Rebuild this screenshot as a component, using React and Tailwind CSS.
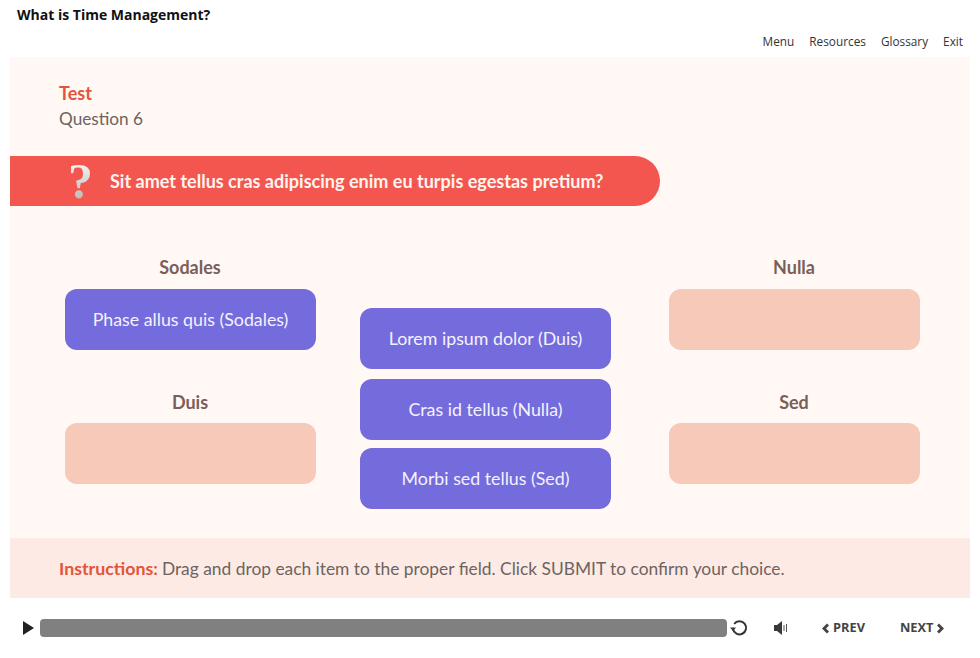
const Tile = ({ children, className = '' }) => (
  <div className={`h-[61px] w-[251px] rounded-xl bg-[#746bdc] flex items-center justify-center text-[17.8px] text-[#f4f2ff] ${className}`}>
    {children}
  </div>
);

const Drop = ({ className = '' }) => (
  <div className={`h-[61px] w-[251px] rounded-xl bg-[#f6c9b8] ${className}`}></div>
);

const Label = ({ children }) => (
  <p className="h-[24px] leading-[23px] w-[250px] text-center text-[18px] font-bold text-[#7a5f58]">{children}</p>
);

const NavLinks = ['Menu', 'Resources', 'Glossary', 'Exit'];

export default function App() {
  return (
    <div className="w-[980px] h-[658px] bg-white overflow-hidden font-['Lato',sans-serif]">
      {/* Cabecera */}
      <div className="h-[57px] flex flex-col font-['Open_Sans',sans-serif]">
        <h1 className="pl-[17px] pt-[5px] h-[34px] leading-[20px] text-[14px] font-bold text-[#111]">What is Time Management?</h1>
        <div className="flex justify-end gap-[15px] pr-[17px] text-[11.8px] leading-[16px] text-[#333] mt-[-1px]">
          {NavLinks.map((item) => (
            <span key={item}>{item}</span>
          ))}
        </div>
      </div>

      {/* Panel de la pregunta */}
      <div className="mx-[10px] h-[481px] bg-[#fff8f5] pt-[24px]">
        <div className="pl-[49px]">
          <p className="h-[25px] leading-[25px] text-[18px] font-bold text-[#e2553a]">Test</p>
          <p className="h-[25px] leading-[25px] text-[17.2px] text-[#6d6361]">Question 6</p>
        </div>

        <div className="mt-[25px] w-[650px] h-[50px] bg-[#f3564e] rounded-r-[25px] flex items-center">
          <span className="w-[100px] pl-[58px] text-[50px] leading-none font-bold font-['Liberation_Serif',serif] bg-gradient-to-b from-white to-[#b5b0ae] bg-clip-text text-transparent">?</span>
          <p className="pt-[2px] text-[18.05px] font-bold text-[#fff3ee]">Sit amet tellus cras adipiscing enim eu turpis egestas pretium?</p>
        </div>

        <div className="mt-[50px] pl-[55px] flex">
          <div className="w-[295px]">
            <Label>Sodales</Label>
            <Tile className="mt-[9px]">Phase allus quis (Sodales)</Tile>
            <div className="mt-[41px]"><Label>Duis</Label></div>
            <Drop className="mt-[8px]" />
          </div>
          <div className="w-[309px] pt-[52px]">
            <Tile>Lorem ipsum dolor (Duis)</Tile>
            <Tile className="mt-[10px]">Cras id tellus (Nulla)</Tile>
            <Tile className="mt-[8px]">Morbi sed tellus (Sed)</Tile>
          </div>
          <div>
            <Label>Nulla</Label>
            <Drop className="mt-[9px]" />
            <div className="mt-[41px]"><Label>Sed</Label></div>
            <Drop className="mt-[8px]" />
          </div>
        </div>
      </div>

      {/* Instrucciones */}
      <div className="mx-[10px] h-[60px] bg-[#fdeae4] pl-[49px] pt-[2px] flex items-baseline leading-[56px] text-[17.36px] text-[#6d6361]">
        <span className="text-[17.8px] font-bold text-[#e2553a] mr-[4px]">Instructions:</span>
        Drag and drop each item to the proper field. Click SUBMIT to confirm your choice.
      </div>

      {/* Controles del reproductor */}
      <div className="h-[60px] flex items-center pl-[23px] font-['Open_Sans',sans-serif]">
        <svg width="11" height="14" viewBox="0 0 11 14">
          <path d="M0 0l11 7-11 7z" fill="#222" />
        </svg>
        <div className="ml-[6px] w-[687px] h-[18px] rounded bg-[#808080]"></div>
        <svg width="18" height="18" viewBox="0 0 18 18" className="ml-[3px]">
          <path d="M4.2 4.8A6.6 6.6 0 1 1 3 10" fill="none" stroke="#333" strokeWidth="2" />
          <path d="M0 8.5h6l-3 3.5z" fill="#333" />
        </svg>
        <svg width="16" height="16" viewBox="0 0 16 16" className="ml-[25px]">
          <path d="M1 5h3l5-4v14l-5-4H1z" fill="#3a3a3a" />
          <path d="M11 5v6M13.5 4v8" stroke="#555" strokeWidth="1" />
        </svg>
        <div className="ml-[32px] flex items-center text-[12.8px] font-bold text-[#444]">
          <svg width="9" height="11" viewBox="0 0 9 11">
            <path d="M6 0.5l2 2-3 3 3 3-2 2-5-5z" fill="#444" />
          </svg>
          <span className="ml-[3px]">PREV</span>
        </div>
        <div className="ml-[35px] flex items-center text-[12.8px] font-bold text-[#444]">
          <span className="mr-[2px]">NEXT</span>
          <svg width="9" height="11" viewBox="0 0 9 11">
            <path d="M3 0.5l-2 2 3 3-3 3 2 2 5-5z" fill="#444" />
          </svg>
        </div>
      </div>
    </div>
  );
}
